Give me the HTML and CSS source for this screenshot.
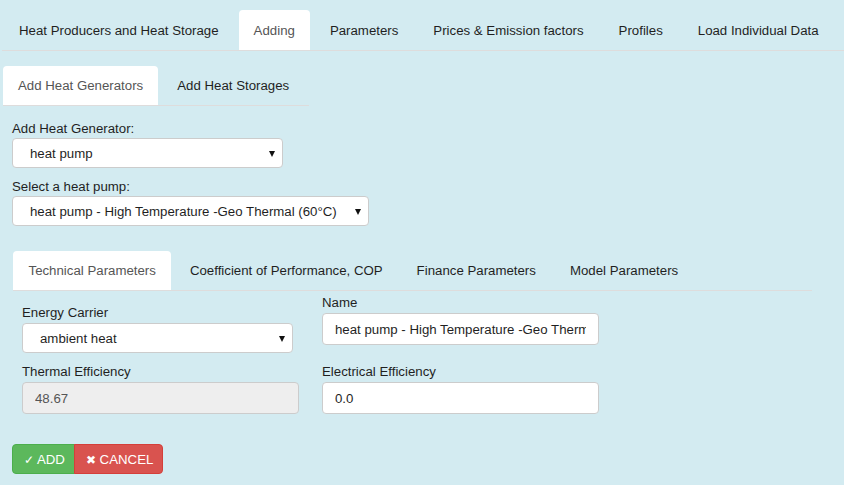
FILE: index.html
```html
<!DOCTYPE html>
<html lang="en">
<head>
<meta charset="utf-8">
<title>Adding</title>
<link rel="stylesheet" href="styles.css">
</head>
<body>
<div class="page">
  <ul class="tabs tabs-main">
    <li class="tab">Heat Producers and Heat Storage</li>
    <li class="tab active">Adding</li>
    <li class="tab">Parameters</li>
    <li class="tab">Prices &amp; Emission factors</li>
    <li class="tab">Profiles</li>
    <li class="tab">Load Individual Data</li>
  </ul>

  <ul class="tabs tabs-sub">
    <li class="tab active">Add Heat Generators</li>
    <li class="tab">Add Heat Storages</li>
  </ul>

  <div class="content">
    <label class="label first">Add Heat Generator:</label>
    <div class="select-wrap sel-gen">
      <select class="select"><option>heat pump</option></select>
    </div>
    <label class="label second">Select a heat pump:</label>
    <div class="select-wrap sel-pump">
      <select class="select"><option>heat pump - High Temperature -Geo Thermal (60°C)</option></select>
    </div>
  </div>

  <ul class="tabs tabs-param">
    <li class="tab active">Technical Parameters</li>
    <li class="tab">Coefficient of Performance, COP</li>
    <li class="tab">Finance Parameters</li>
    <li class="tab">Model Parameters</li>
  </ul>

  <div class="form-grid">
    <div class="field field-carrier">
      <label class="flabel">Energy Carrier</label>
      <div class="select-wrap sel-carrier">
        <select class="select"><option>ambient heat</option></select>
      </div>
    </div>
    <div class="field">
      <label class="flabel">Name</label>
      <input class="input" type="text" value="heat pump - High Temperature -Geo Thermal (60°C)">
    </div>
    <div class="field">
      <label class="flabel">Thermal Efficiency</label>
      <input class="input readonly" type="text" value="48.67" readonly>
    </div>
    <div class="field">
      <label class="flabel">Electrical Efficiency</label>
      <input class="input" type="text" value="0.0">
    </div>
  </div>

  <div class="btn-group">
    <button class="btn btn-add"><span class="icon">✓</span> ADD</button>
    <button class="btn btn-cancel"><span class="icon">✖</span> CANCEL</button>
  </div>
</div>
</body>
</html>
```

FILE: styles.css
```css
html, body {
  margin: 0;
  padding: 0;
}
body {
  background: #d3ebf1;
  font-family: "Liberation Sans", Arial, sans-serif;
  font-size: 13.25px;
  color: #1f1f1f;
}
.page {
  padding: 0 0 0 2px;
}
.tabs {
  display: flex;
  list-style: none;
  margin: 0;
  padding: 0;
  border-bottom: 1px solid #dedcdc;
}
.tab {
  padding: 10px 15px;
  line-height: 20px;
  color: #1f1f1f;
  border-radius: 4px 4px 0 0;
  white-space: nowrap;
}
.tab.active {
  background: #fff;
  color: #555;
}
.tabs-main {
  margin-top: 10px;
  padding-left: 2px;
  gap: 5px;
}
.tabs-main .tab {
  padding-top: 11px;
  padding-bottom: 9px;
}
.tabs-sub {
  margin: 15px 0 0 1px;
  width: 306px;
  gap: 4px;
}
.tabs-sub .tab,
.tabs-param .tab {
  line-height: 19px;
}
.content {
  padding-left: 10px;
  display: flex;
  flex-direction: column;
  align-items: flex-start;
}
.label {
  display: block;
  line-height: 18px;
  color: #1f1f1f;
}
.label.first { margin-top: 14px; }
.label.second { margin-top: 10px; }

.select-wrap {
  position: relative;
  height: 30px;
}
.select-wrap::after {
  content: "";
  position: absolute;
  right: 8px;
  top: 13px;
  border-left: 3.5px solid transparent;
  border-right: 3.5px solid transparent;
  border-top: 6px solid #111;
  pointer-events: none;
}
.select {
  -webkit-appearance: none;
  appearance: none;
  box-sizing: border-box;
  width: 100%;
  height: 30px;
  margin: 0;
  padding: 0 20px 0 17px;
  border: 1px solid #ccc;
  border-radius: 4px;
  background: #fff;
  font-family: "Liberation Sans", Arial, sans-serif;
  font-size: 13.25px;
  color: #1f1f1f;
}
.sel-gen { width: 271px; }
.sel-pump { width: 357px; }
.sel-carrier { width: 271px; }

.tabs-param {
  margin: 25px 0 0 11px;
  width: 799px;
  gap: 3px;
}
.tabs-param .tab {
  padding: 10px 15.5px;
}

.form-grid {
  display: grid;
  grid-template-columns: 300px 300px;
  row-gap: 9px;
  margin: 2px 0 0 20px;
}
.field {
  display: flex;
  flex-direction: column;
  align-items: flex-start;
}
.field-carrier {
  padding-top: 10px;
}
.flabel {
  line-height: 20px;
  color: #1f1f1f;
}
.input {
  box-sizing: border-box;
  width: 277px;
  height: 32px;
  margin: 0;
  padding: 0 12px;
  border: 1px solid #ccc;
  border-radius: 4px;
  background: #fff;
  font-family: "Liberation Sans", Arial, sans-serif;
  font-size: 13.25px;
  color: #1f1f1f;
  outline: none;
}
.input.readonly {
  background: #eee;
  color: #555;
}

.btn-group {
  display: flex;
  margin: 30px 0 0 10px;
}
.btn {
  height: 30px;
  padding: 0 9px 0 11px;
  border: 1px solid transparent;
  font-family: "Liberation Sans", Arial, sans-serif;
  font-size: 13.25px;
  color: #fff;
  cursor: pointer;
  white-space: nowrap;
}
.icon {
  font-size: 12px;
}
.btn-add {
  background: #5cb85c;
  border-color: #4cae4c;
  border-radius: 4px 0 0 4px;
}
.btn-cancel {
  background: #d9534f;
  border-color: #d43f3a;
  border-radius: 0 4px 4px 0;
  margin-left: -1px;
}
```
